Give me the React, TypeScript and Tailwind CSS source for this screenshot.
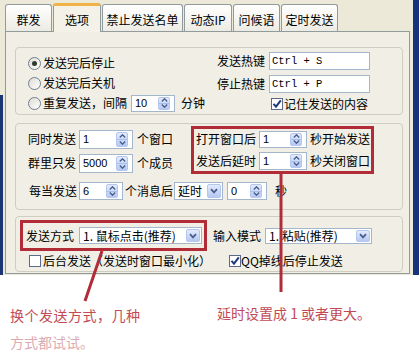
import React from "react";

const CJK = "font-['Noto_Sans_CJK_SC','Noto_Sans',sans-serif]";

function Chevron() {
  return (
    <svg width="8" height="6" viewBox="0 0 8 6">
      <path d="M1 1.2 L4 4.4 L7 1.2" stroke="#4a5f8c" strokeWidth="1.8" fill="none" />
    </svg>
  );
}

function Spin() {
  return (
    <div className="my-[1px] flex w-[12px] flex-col self-stretch overflow-hidden rounded-[2px] border border-[#b4c6ec] bg-gradient-to-b from-[#e3ebfc] to-[#b6c8f3]">
      <div className="flex flex-1 items-center justify-center border-b border-[#a9bde9]">
        <svg width="7" height="4" viewBox="0 0 7 4">
          <path d="M0.8 3.4 L3.5 0.8 L6.2 3.4" stroke="#4a5f8c" strokeWidth="1.4" fill="none" />
        </svg>
      </div>
      <div className="flex flex-1 items-center justify-center">
        <svg width="7" height="4" viewBox="0 0 7 4">
          <path d="M0.8 0.6 L3.5 3.2 L6.2 0.6" stroke="#4a5f8c" strokeWidth="1.4" fill="none" />
        </svg>
      </div>
    </div>
  );
}

function SpinBox({ value, className }: { value: string; className: string }) {
  return (
    <div
      className={`flex items-center justify-between border border-[#a4b6cc] bg-white pl-[3px] pr-[4px] font-['Liberation_Sans',sans-serif] text-[11px] text-black ${className}`}
    >
      <span className="leading-none">{value}</span>
      <Spin />
    </div>
  );
}

function DropBtn() {
  return (
    <div className="my-[1px] flex w-[14px] items-center justify-center self-stretch rounded-[2px] border border-[#b4c6ec] bg-gradient-to-b from-[#e3ebfc] to-[#b6c8f3]">
      <Chevron />
    </div>
  );
}

function Combo({ text, className }: { text: string; className: string }) {
  return (
    <div className={`flex items-center justify-between border border-[#a4b6cc] bg-white pl-[3px] pr-[1px] ${className}`}>
      <span className="leading-none">{text}</span>
      <DropBtn />
    </div>
  );
}

function Radio({ checked }: { checked?: boolean }) {
  return (
    <div className="flex h-[13px] w-[13px] shrink-0 items-center justify-center rounded-full border border-[#6f7e94] bg-gradient-to-br from-[#dedcd2] to-white">
      {checked && <div className="h-[5px] w-[5px] rounded-full bg-[#2b3a2e]" />}
    </div>
  );
}

function Check({ checked }: { checked?: boolean }) {
  return (
    <div className="relative flex h-[12px] w-[12px] shrink-0 items-center justify-center border border-[#5a6b8a] bg-white">
      {checked && (
        <svg width="10" height="10" viewBox="0 0 10 10">
          <path d="M1.5 4.8 L4 7.6 L8.8 1.4" stroke="#1f3a7a" strokeWidth="2" fill="none" />
        </svg>
      )}
    </div>
  );
}

function Tab({ label, className, selected }: { label: string; className: string; selected?: boolean }) {
  if (selected) {
    return (
      <div
        className={`relative z-10 -mb-[1px] flex h-[29px] items-center justify-center rounded-t-[3px] border border-b-0 border-[#919b9c] border-t-[3px] border-t-[#f0b247] bg-[#f3f1e8] pt-[1px] ${className}`}
      >
        {label}
      </div>
    );
  }
  return (
    <div
      className={`flex h-[27px] items-center justify-center rounded-t-[3px] border border-b-0 border-[#919b9c] bg-gradient-to-b from-white to-[#ecebe3] pt-[4px] ${className}`}
    >
      {label}
    </div>
  );
}

export default function App() {
  return (
    <div className={`relative h-[356px] w-[419px] overflow-hidden bg-white text-[12px] leading-none text-black ${CJK}`}>
      <div className="flex h-[275px]">
        <div className="flex w-[3px] flex-col">
          <div className="h-[95px] bg-[#ece9d8]" />
          <div className="flex-1 bg-[#1b3575]" />
        </div>
        <div className="flex w-[410px] flex-col bg-[#ece9d8] pl-[2px]">
          {/* tabs */}
          <div className="flex h-[31px] items-end gap-[1px]">
            <Tab label="群发" className="w-[47px]" />
            <Tab label="选项" className="w-[48px]" selected />
            <Tab label="禁止发送名单" className="w-[81px]" />
            <Tab label="动态IP" className="w-[48px]" />
            <Tab label="问候语" className="w-[47px]" />
            <Tab label="定时发送" className="w-[57px]" />
          </div>
          {/* panel */}
          <div className="flex h-[243px] w-[405px] flex-col border border-[#919b9c] bg-[#f1efe5] pl-[9px]">
            {/* group 1 */}
            <div className="mt-[15px] flex h-[68px] w-[388px] rounded-[4px] border border-[#cfcdbf]">
              <div className="flex w-[201px] flex-col pl-[12px] pt-[5px]">
                <div className="flex h-[20px] items-center gap-[2px]">
                  <Radio checked />
                  <span>发送完后停止</span>
                </div>
                <div className="flex h-[20px] items-center gap-[2px]">
                  <Radio />
                  <span>发送完后关机</span>
                </div>
                <div className="flex h-[20px] items-center">
                  <Radio />
                  <span className="ml-[2px] w-[88px]">重复发送，间隔</span>
                  <SpinBox value="10" className="h-[17px] w-[44px]" />
                  <span className="ml-[6px]">分钟</span>
                </div>
              </div>
              <div className="flex flex-col pt-[3px]">
                <div className="flex h-[20px] items-center">
                  <span className="w-[48px]">发送热键</span>
                  <div className="ml-[4px] flex h-[18px] w-[101px] items-center border border-[#a4b6cc] bg-white pl-[2px] font-['Liberation_Mono',monospace] text-[10.5px]">
                    Ctrl + S
                  </div>
                </div>
                <div className="mt-[3px] flex h-[20px] items-center">
                  <span className="w-[48px]">停止热键</span>
                  <div className="ml-[4px] flex h-[18px] w-[101px] items-center border border-[#a4b6cc] bg-white pl-[2px] font-['Liberation_Mono',monospace] text-[10.5px]">
                    Ctrl + P
                  </div>
                </div>
                <div className="ml-[54px] mt-[2px] flex h-[16px] items-center gap-[1px]">
                  <Check checked />
                  <span>记住发送的内容</span>
                </div>
              </div>
            </div>

            {/* group 2 */}
            <div className="mt-[8px] flex h-[87px] w-[388px] flex-col rounded-[4px] border border-[#cfcdbf]">
              <div className="flex items-start">
                <div className="flex w-[175px] flex-col gap-[4px] pl-[12px] pt-[5px]">
                  <div className="flex h-[20px] items-center">
                    <span className="w-[48px]">同时发送</span>
                    <SpinBox value="1" className="ml-[3px] h-[19px] w-[54px]" />
                    <span className="ml-[4px]">个窗口</span>
                  </div>
                  <div className="flex h-[20px] items-center">
                    <span className="w-[48px]">群里只发</span>
                    <SpinBox value="5000" className="ml-[3px] h-[19px] w-[54px]" />
                    <span className="ml-[4px]">个成员</span>
                  </div>
                </div>
                <div className="mt-[2px] flex h-[48px] w-[183px] flex-col gap-[2px] border-[3px] border-[#b12c36] pl-[2px]">
                  <div className="flex h-[20px] items-center">
                    <span className="w-[60px]">打开窗口后</span>
                    <SpinBox value="1" className="ml-[3px] h-[17px] w-[48px]" />
                    <span className="ml-[3px]">秒开始发送</span>
                  </div>
                  <div className="flex h-[20px] items-center">
                    <span className="w-[60px]">发送后延时</span>
                    <SpinBox value="1" className="ml-[3px] h-[18px] w-[48px]" />
                    <span className="ml-[3px]">秒关闭窗口</span>
                  </div>
                </div>
              </div>
              <div className="mt-[8px] flex h-[18px] items-center pl-[13px]">
                <span className="w-[48px]">每当发送</span>
                <SpinBox value="6" className="ml-[2px] h-[18px] w-[44px]" />
                <span className="ml-[2px] w-[48px]">个消息后</span>
                <Combo text="延时" className="ml-[1px] h-[18px] w-[49px]" />
                <SpinBox value="0" className="ml-[4px] h-[18px] w-[40px]" />
                <span className="ml-[8px]">秒</span>
              </div>
            </div>

            {/* group 3 */}
            <div className="mt-[6px] flex h-[56px] w-[388px] flex-col rounded-[4px] border border-[#cfcdbf]">
              <div className="mt-[3px] flex items-center">
                <div className="ml-[4px] flex h-[31px] w-[187px] items-center border-[3px] border-[#b12c36] pl-[3px]">
                  <span className="w-[48px]">发送方式</span>
                  <Combo text="1. 鼠标点击(推荐)" className="ml-[5px] h-[17px] w-[123px]" />
                </div>
                <span className="ml-[6px] w-[48px]">输入模式</span>
                <Combo text="1. 粘贴(推荐)" className="ml-[4px] h-[16px] w-[107px]" />
              </div>
              <div className="mt-[3px] flex h-[14px] items-center pl-[13px]">
                <div className="flex w-[200px] items-center gap-[2px]">
                  <Check />
                  <span>后台发送（发送时窗口最小化）</span>
                </div>
                <div className="flex items-center gap-[0px]">
                  <Check checked />
                  <span>QQ掉线后停止发送</span>
                </div>
              </div>
            </div>
          </div>
        </div>
        <div className="w-[6px] bg-[#17337e]" />
      </div>

      {/* annotations */}
      <div className="flex text-[14px] leading-[20px]">
        <div className="w-[207px] pl-[10px] pt-[30px]">
          <div className="tracking-[0.5px] text-[#c24a55]">换个发送方式，几种</div>
          <div className="mt-[7px] text-[#dcaab1]">方式都试试。</div>
        </div>
        <div className="pl-[10px] pt-[28px] text-[#c24a55]">延时设置成 1 或者更大。</div>
      </div>

      <svg className="pointer-events-none absolute left-0 top-0" width="419" height="356">
        <line x1="102" y1="251" x2="85" y2="301" stroke="#b02c38" strokeWidth="3" />
        <line x1="281" y1="174" x2="281" y2="292" stroke="#b02c38" strokeWidth="3" />
      </svg>
    </div>
  );
}
